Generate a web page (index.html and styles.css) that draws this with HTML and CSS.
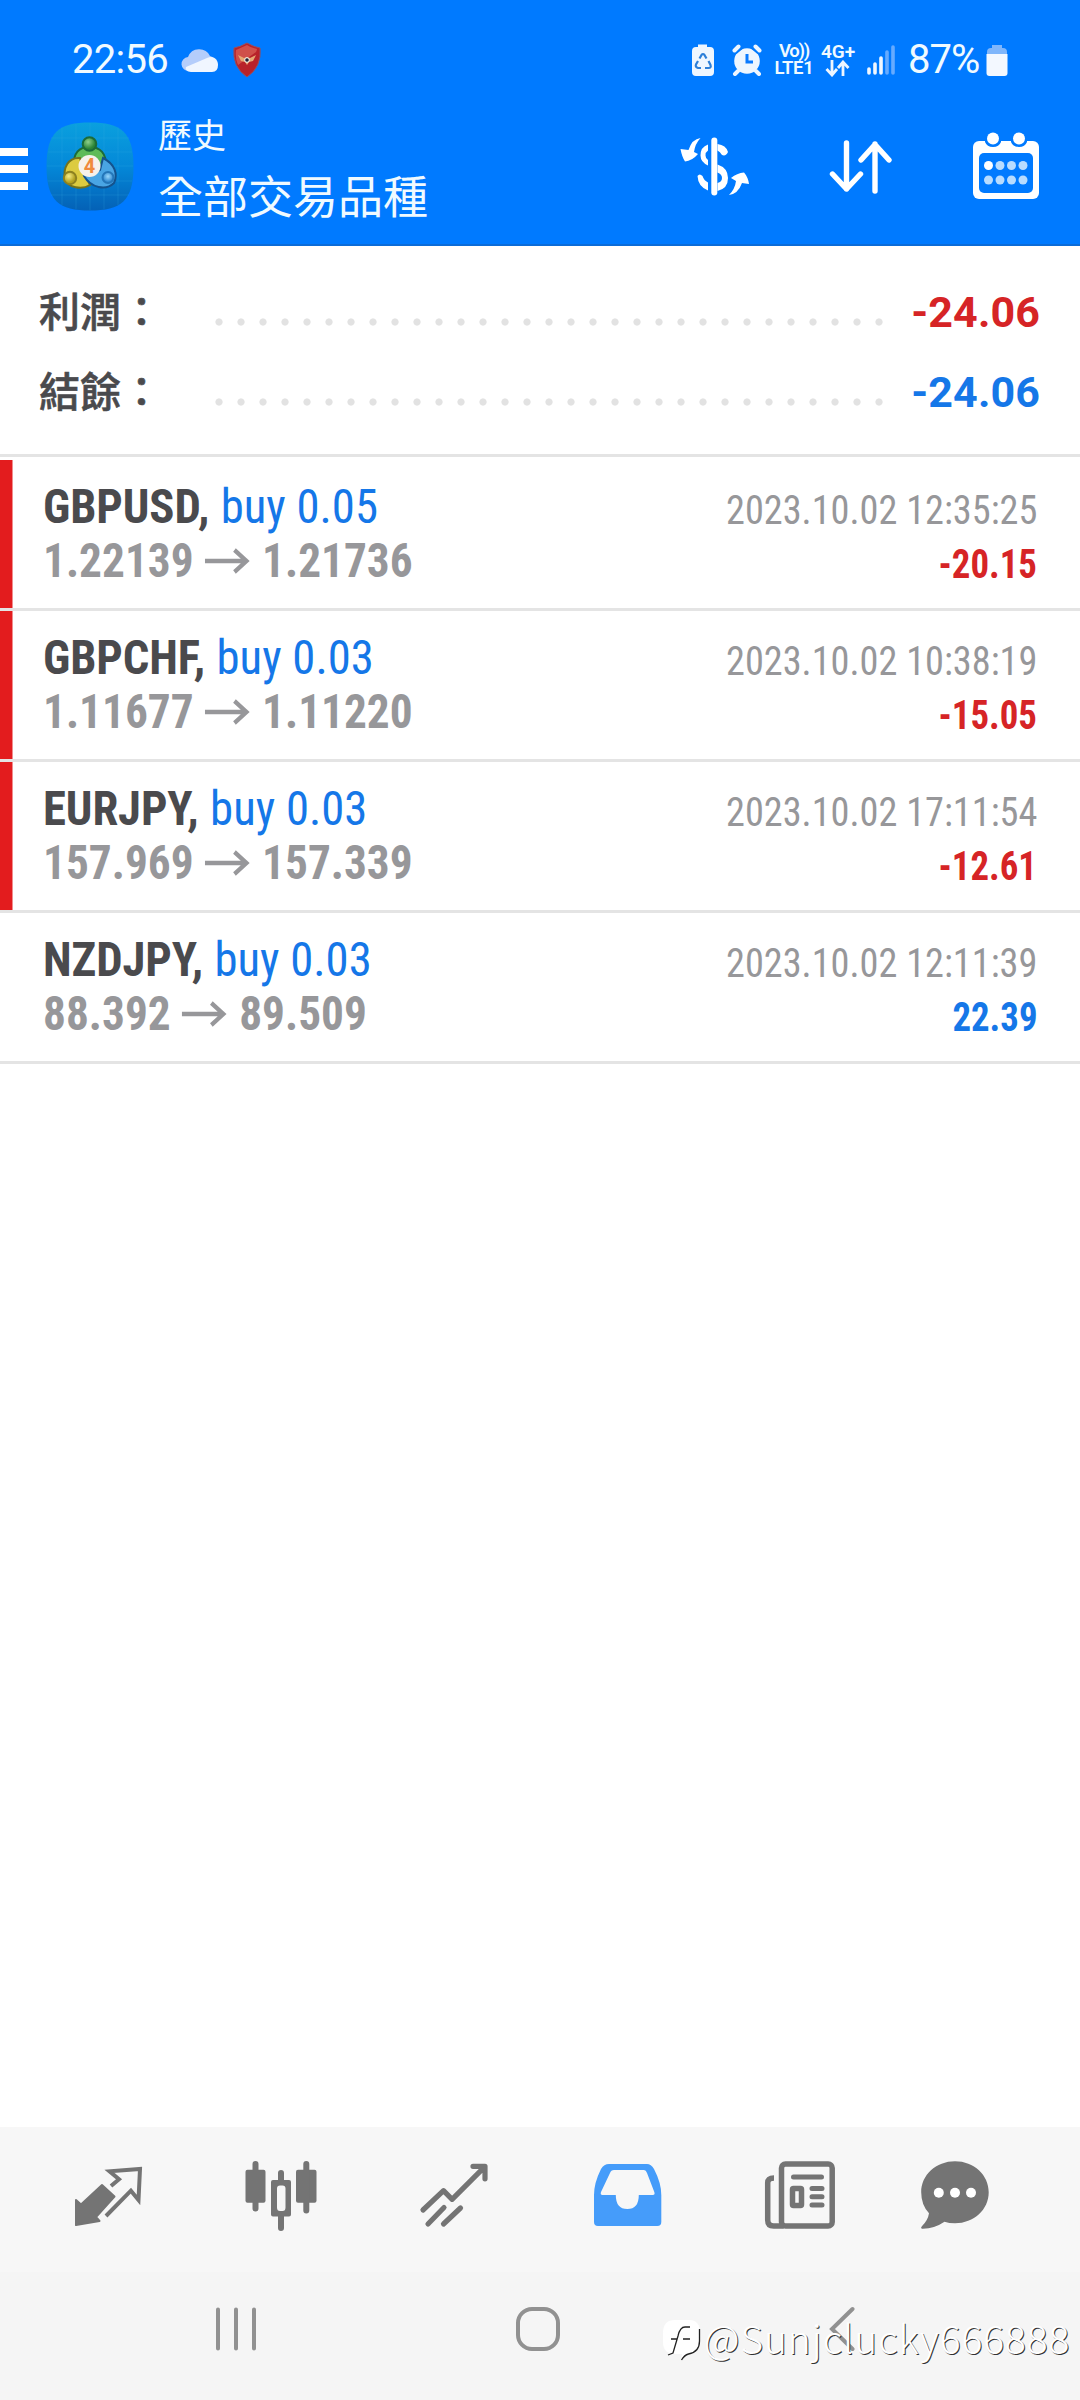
FILE: index.html
```html
<!DOCTYPE html>
<html lang="zh-Hant">
<head>
<meta charset="utf-8">
<title>歷史</title>
<link rel="stylesheet" href="styles.css">
</head>
<body>
<div class="screen">
  <header class="header">
    <div class="status">
      <span class="clock">22:56</span>
      <svg class="st-cloud" width="38" height="26" viewBox="0 0 38 26"><path d="M8 24a7 7 0 0 1-1-14A12 12 0 0 1 29 9a8 8 0 0 1 1 15z" fill="#b4cdfb"/><path d="M10 25C6 25 4 22 5 20L26 11C33 8 37 13 37 18q0 7-6 7z" fill="#f0f6ff"/></svg>
      <svg class="st-shield" width="28" height="36" viewBox="0 0 28 36"><path d="M14 1Q21 5 27 6Q29 25 14 35Q-1 25 1 6Q7 5 14 1z" fill="#b8222a" stroke="#96505f"/><path d="M14 3L3 8Q2 17 5 23L23 10Q24 8 24 7Q18 6 14 3z" fill="#d0504a"/><path d="M5 13l6 3 3-1 3 1 6-3-3 6-4 1-2 3-2-3-4-1z" fill="#e6a873"/><circle cx="14" cy="18" r="2.300" fill="#223" stroke="#fff"/></svg>
      <span class="st-gap"></span>
      <svg class="st-saver" width="24" height="34" viewBox="0 0 24 34"><path d="M7 4V1.500h9V4h3q4 0 4 4v21q0 4-4 4H5q-4 0-4-4V8q0-4 4-4z" fill="#eef6ff"/><path d="M8.500 15.500L10.500 12q1.500-2 3 0l2 3.500M17.500 18l2 4q1 3-2 3h-3.500M10 25H7q-3-1-2-3.500L7 18" fill="none" stroke="#2d7fd8" stroke-width="2.200"/></svg>
      <svg class="st-alarm" width="30" height="32" viewBox="0 0 30 32"><circle cx="15" cy="17" r="12.800" fill="#eef6ff"/><path d="M2 7l6-5M28 7l-6-5" stroke="#007aff" stroke-width="8"/><path d="M2.500 6.500l4-4M27.500 6.500l-4-4M6 27l-3 3M24 27l3 3" stroke="#eef6ff" stroke-width="4" stroke-linecap="round"/><path d="M15 10v8h6" fill="none" stroke="#0a7aff" stroke-width="3"/></svg>
      <span class="st-net volte"><b class="vo">Vo))</b><b>LTE1</b></span>
      <span class="st-net lte"><b>4G+</b><svg width="26" height="17" viewBox="0 0 26 17"><path d="M7 0v14M1.500 9L7 15l5-6M18 16V2M13 8l5-6 5.500 6" fill="none" stroke="#eef6ff" stroke-width="2.800"/></svg></span>
      <svg class="st-signal" width="28" height="32" viewBox="0 0 28 32"><g stroke-width="3.600" stroke-linecap="round" stroke="#f0f7ff"><path d="M2 25v4M8 20v9M14 14v15"/><path d="M20 8v21M26 3v26" stroke="#66abff"/></g></svg>
      <span class="percent">87%</span>
      <svg class="st-batt" width="22" height="33" viewBox="0 0 22 33"><path d="M6 4V1h10v3h1q4 0 4 4v3H1V8q0-4 4-4z" fill="#7fb6fb"/><path d="M.5 10h21v19q0 3-3 3h-15q-3 0-3-3z" fill="#f3f8ff"/></svg>
    </div>
    <div class="appbar">
      <div class="menu"><i></i><i></i><i></i></div>
      <svg class="logo" width="88" height="89" viewBox="0 0 88 89">
        <defs>
          <linearGradient id="sky" x1="0" y1="0" x2="0" y2="1"><stop offset="0" stop-color="#0aa0de"/><stop offset=".5" stop-color="#0488d8"/><stop offset="1" stop-color="#0461b6"/></linearGradient>
          <radialGradient id="gr" cx=".4" cy=".35"><stop offset="0" stop-color="#8fd08a"/><stop offset="1" stop-color="#2a8436"/></radialGradient>
          <radialGradient id="ye" cx=".4" cy=".35"><stop offset="0" stop-color="#f6ec86"/><stop offset="1" stop-color="#b3a221"/></radialGradient>
          <radialGradient id="bl" cx=".5" cy=".4"><stop offset="0" stop-color="#9ad7fb"/><stop offset="1" stop-color="#2c86cf"/></radialGradient>
        </defs>
        <path d="M44 .5C75 .5 87.500 10 87.500 44.500S75 88.500 44 88.500.5 79 .5 44.500 13 .5 44 .5z" fill="url(#sky)"/>
        <path d="M16 6v77M30 2v85M44 1v87M58 2v85M72 6v77M5 16h78M2 30h84M1 44h86M2 59h84M5 73h78" stroke="#35b2ea" stroke-opacity=".22"/>
        <g stroke-width="2">
          <path d="M28 44C27 31 33 25 43.500 25S61 31 60 46L52 50 36 42z" fill="#5fbb58" stroke="#1c6b38"/>
          <path d="M34 36C22 35 17 46 19 57 22 66 36 68 44 63L38 50z" fill="#dccb40" stroke="#74721c"/>
          <path d="M57 36C69 42 72 52 68 61 60 69 45 66 38 54L54 48z" fill="#49a5e4" stroke="#14528c"/>
          <circle cx="43.500" cy="22" r="6.800" fill="url(#gr)" stroke="#1c6b38"/>
          <circle cx="24" cy="56" r="6.200" fill="url(#ye)" stroke="#8d8120"/>
          <circle cx="62" cy="55.500" r="5.500" fill="url(#bl)" stroke="#2476b8"/>
        </g>
        <circle cx="43.500" cy="44" r="11" fill="#f7f1ea"/><text x="43.500" y="51" text-anchor="middle" class="four">4</text>
      </svg>
      <div class="titles"><div class="t1">歷史</div><div class="t2">全部交易品種</div></div>
      <svg class="ic-dollar" width="70" height="62" viewBox="0 0 70 62">
        <path d="M28 8.500Q20.500 11 20.500 19.500 20.500 26 28 29.500V24Q25.500 22.500 25.500 19.500 25.500 16 28 14.500zM17.500 40q2-3 5 0 1.500 4.500 5.500 6.500v8Q18 50.500 17.500 40zM37.500 8q8.500 1 10.500 8-2 4.500-6 3-2-3.500-4.500-4.500zM37.500 28.500Q48 32 48 42 48 52.500 37.500 55v-8q4.500-1 4.500-5t-4.500-5.500z" fill="#fff"/>
        <path d="M34.300 4.500v52" stroke="#fff" stroke-width="6" stroke-linecap="round"/>
        <path d="M20.500 2Q12 3 8.500 14L.5 13Q2 21 5 25.500Q12 25 18 18L14 16Q15 8 20.500 2zM49 59Q58 58 62 47L69 48Q68 41 64 36.500Q57 37 51 42L56 45Q55 53 49 59z" fill="#fff"/>
      </svg>
      <svg class="ic-sort" width="64" height="54" viewBox="0 0 64 54"><path d="M17.500 3v46M3.500 34l14 15 14-15M46 51V4M32 20L46 4.500 60 20" fill="none" stroke="#fff" stroke-width="5.400" stroke-linecap="round" stroke-linejoin="round"/></svg>
      <svg class="ic-cal" width="68" height="68" viewBox="0 0 68 68">
        <rect x="1" y="9" width="66" height="58" rx="6" fill="#fff"/><rect x="7" y="21" width="54" height="40" rx="5" fill="#007aff"/>
        <path d="M13 9v1q2 5 8 5t8-5V9zM39 9v1q2 5 8 5t8-5V9z" fill="#007aff"/>
        <circle cx="21" cy="6.500" r="6" fill="#fff"/><circle cx="47" cy="6.500" r="6" fill="#fff"/>
        <g fill="#b8dcff"><circle cx="16.500" cy="33.500" r="4.500" fill="#fff"/><circle cx="28" cy="33.500" r="4.500"/><circle cx="39.500" cy="33.500" r="4.500"/><circle cx="51" cy="33.500" r="4.500"/><circle cx="16.500" cy="48" r="4.500"/><circle cx="28" cy="48" r="4.500"/><circle cx="39.500" cy="48" r="4.500"/><circle cx="51" cy="48" r="4.500"/></g>
      </svg>
    </div>
  </header>

  <section class="summary">
    <div class="sum"><span class="lbl">利潤：</span><span class="dots"></span><span class="val red">-24.06</span></div>
    <div class="sum"><span class="lbl">結餘：</span><span class="dots"></span><span class="val blue">-24.06</span></div>
  </section>

  <main class="list">
    <div class="deal loss"><div class="line"><div class="order"><b class="sym">GBPUSD,</b><span class="side">buy 0.05</span></div><span class="date">2023.10.02 12:35:25</span></div>
      <div class="line"><div class="prices"><b>1.22139</b><svg class="arrow" width="50" height="28" viewBox="0 0 50 28"><path d="M0 14h46M32 3l13 11-13 11" fill="none" stroke="#97979a" stroke-width="4.400"/></svg><b>1.21736</b></div><b class="pl red">-20.15</b></div></div>
    <div class="deal loss"><div class="line"><div class="order"><b class="sym">GBPCHF,</b><span class="side">buy 0.03</span></div><span class="date">2023.10.02 10:38:19</span></div>
      <div class="line"><div class="prices"><b>1.11677</b><svg class="arrow" width="50" height="28" viewBox="0 0 50 28"><path d="M0 14h46M32 3l13 11-13 11" fill="none" stroke="#97979a" stroke-width="4.400"/></svg><b>1.11220</b></div><b class="pl red">-15.05</b></div></div>
    <div class="deal loss"><div class="line"><div class="order"><b class="sym">EURJPY,</b><span class="side">buy 0.03</span></div><span class="date">2023.10.02 17:11:54</span></div>
      <div class="line"><div class="prices"><b>157.969</b><svg class="arrow" width="50" height="28" viewBox="0 0 50 28"><path d="M0 14h46M32 3l13 11-13 11" fill="none" stroke="#97979a" stroke-width="4.400"/></svg><b>157.339</b></div><b class="pl red">-12.61</b></div></div>
    <div class="deal"><div class="line"><div class="order"><b class="sym">NZDJPY,</b><span class="side">buy 0.03</span></div><span class="date">2023.10.02 12:11:39</span></div>
      <div class="line"><div class="prices"><b>88.392</b><svg class="arrow" width="50" height="28" viewBox="0 0 50 28"><path d="M0 14h46M32 3l13 11-13 11" fill="none" stroke="#97979a" stroke-width="4.400"/></svg><b>89.509</b></div><b class="pl blue">22.39</b></div></div>
  </main>

  <nav class="tabs">
    <svg viewBox="0 0 72 72"><path d="M30 25L42.500 36.500 24 57 27.500 61 4 65V40l5 4.500z" fill="#747474" stroke="#747474" stroke-width="2" stroke-linejoin="round"/><path d="M39 26l8-6.700-9.500-8L68 9l-1.500 31-7.600-9.300L34 56" fill="none" stroke="#747474" stroke-width="4"/></svg>
    <svg viewBox="0 0 72 72"><g fill="#747474"><rect x=".5" y="9.700" width="20" height="33" rx="2"/><rect x="51" y="9.700" width="20.500" height="33" rx="2"/></g><path d="M10.500 4v44.500M61.300 4v46.500M36 13v8M36 56v12" stroke="#747474" stroke-width="6" stroke-linecap="round"/><path fill-rule="evenodd" d="M28 20h16q2 0 2 2v32.500q0 2-2 2H28q-2 0-2-2V22q0-2 2-2zm7 5.500q-3 0-3 3v19q0 3.500 3 3.500h2.500q3 0 3-3.500v-19q0-3-3-3z" fill="#747474"/></svg>
    <svg viewBox="0 0 72 72"><path d="M5 50l20.500-19.300 8.600 8.600 32-32M55 6.300h12v12.500M10 64l16-16.500M25.500 64l17-16" fill="none" stroke="#747474" stroke-width="5.200" stroke-linecap="round" stroke-linejoin="round"/></svg>
    <svg viewBox="0 0 72 72"><path fill-rule="evenodd" d="M18 4h38q4 0 7 5 7.300 14 7.300 26v27q0 4-4 4H7q-4 0-4-4V35Q3 23 10 9q3-5 8-5zm5 6q-3 0-4 3L10 32q-1 3 1.500 3h13.300q0 14 11.500 14T47.800 35h14q2.500 0 1.500-3L56 13q-1-3-3-3z" fill="#459cfa"/></svg>
    <svg viewBox="0 0 72 72"><g fill="none" stroke="#747474" stroke-width="5.500"><rect x="17.500" y="4" width="50.700" height="62" rx="4"/><path d="M10 18Q3.700 18 3.700 23V60q0 6 6 6h10"/><path d="M29.500 17h28M48 28.500h10M48 36.800h10M48 45h10" stroke-linecap="round" stroke-width="5"/><rect x="28.500" y="28.500" width="9" height="17" rx="1"/></g></svg>
    <svg viewBox="0 0 72 72"><path d="M36 1.300C55 1.300 69.700 15 69.700 32.300S55 63.300 36 63.300q-6 0-10.500-1.500Q15 69 3 68.700 1 68 3.500 65.500 9 60 10 53.300 2.200 45 2.200 32.300C2.200 15 17 1.300 36 1.300z" fill="#747474"/><g fill="#fff"><circle cx="19.800" cy="32.700" r="5"/><circle cx="36" cy="32.700" r="5"/><circle cx="52" cy="32.700" r="5"/></g></svg>
  </nav>
  <footer class="sysnav">
    <svg width="40" height="46" viewBox="0 0 40 46"><path d="M2 3.500v39M20 3.500v39M38 3.500v39" stroke="#919191" stroke-width="4" stroke-linecap="round"/></svg>
    <svg width="46" height="46" viewBox="0 0 46 46"><rect x="3" y="3" width="40" height="40" rx="14" fill="none" stroke="#919191" stroke-width="4"/></svg>
    <svg width="26" height="46" viewBox="0 0 26 46"><path d="M23.500 3L3 23l20.500 20" fill="none" stroke="#919191" stroke-width="4" stroke-linecap="round"/></svg>
  </footer>
  <div class="mark">
    <svg width="42" height="46" viewBox="0 0 42 46"><path d="M14 3h14q11 0 11 13v8q0 12-12 13l-7 6 1-6h-7Q2 37 2 25V16Q2 3 14 3z" fill="#fff"/><path d="M38.500 12v12q0 11-11 13-4 1-7 6M7 38l5-2 5-17q2-9 7-9h5M10 22h6M22 22h7" fill="none" stroke="#222" stroke-width="1.300"/></svg>
    <span>@Sunjclucky666888</span>
  </div>
</div>
</body>
</html>
```
FILE: styles.css
```css
* { box-sizing: border-box; }
body { margin: 0; background: #fff; font-family: Roboto, "Noto Sans CJK TC", sans-serif; }
.screen { position: relative; width: 1080px; height: 2400px; display: flex; flex-direction: column; overflow: hidden; }
svg { display: block; flex: none; }
.red { color: #d62426; }
.blue { color: #1577e8; }

.header { height: 246px; background: #007aff; border-bottom: 2px solid #0c6cd8; color: #f0faff; }
.status { height: 96px; padding: 24px 72px 0 72px; display: flex; align-items: center; white-space: nowrap; }
.clock, .percent { font-size: 40px; line-height: 72px; letter-spacing: -.7px; }
.clock { width: 98px; }
.st-cloud { margin-left: 11px; }
.st-shield { margin-left: 14px; }
.st-gap { flex: 1; }
.st-alarm { margin-left: 17px; }
.st-net { display: flex; flex-direction: column; align-items: center; font-size: 19px; line-height: 17px; height: 34px; }
.st-net b { font-weight: 600; }
.volte { width: 40px; margin-left: 12px; font-size: 18.5px; letter-spacing: -.3px; }
.vo { letter-spacing: -1.2px; }
.lte { width: 34px; margin-left: 7px; }
.st-signal { margin-left: 12px; }
.percent { width: 73px; margin-left: 13px; letter-spacing: -1px; }
.st-batt { margin-left: 5px; }

.appbar { height: 148px; display: flex; align-items: flex-start; }
.menu { width: 28px; margin: 52px 18px 0 0; display: grid; gap: 9px; }
.menu i { height: 8px; background: #fff; }
.logo { margin-top: 26px; }
.four { font: 700 20px Roboto, sans-serif; fill: #f08a3c; }
.titles { width: 521px; margin: 18px 0 0 24px; }
.t1 { font-size: 34px; line-height: 44px; }
.t2 { font-size: 45px; line-height: 60px; margin-top: 11px; }
.ic-dollar { margin: 40px 0 0 1px; }
.ic-sort { margin: 44px 0 0 79px; }
.ic-cal { margin: 36px 0 0 79px; }

.summary { height: 211px; padding: 26px 40px 0 39px; border-bottom: 3px solid #e4e4e4; }
.sum { display: flex; height: 80px; align-items: center; }
.lbl { width: 176px; padding-bottom: 6px; font-size: 41px; font-weight: 500; color: #4a4a4d; -webkit-text-stroke: .6px #4a4a4d; }
.dots { width: 682px; height: 8px; margin: 20px 0 0 -7px; background: radial-gradient(circle at center, #e2e2e2 3.2px, transparent 4px) 0 0 / 22px 8px; }
.val { flex: 1; text-align: right; font-size: 43px; font-weight: 700; letter-spacing: .1px; }

.list { flex: 1; padding-top: 3px; }
.deal { display: grid; grid-template-rows: 54px 54px; height: 151px; padding: 20px 43px 0 43px; border-bottom: 3px solid #e4e4e4; }
.loss { background: linear-gradient(#e31c1e, #e31c1e) 0 0 / 12.5px 100% no-repeat; }
.line { display: flex; justify-content: space-between; align-items: baseline; line-height: 54px; font-stretch: 75%; font-family: "Roboto Condensed", Roboto, sans-serif; white-space: nowrap; }
.order, .prices { display: flex; align-items: baseline; font-size: 49px; transform-origin: 0 50%; }
.order { transform: scaleX(.953); }
.prices { transform: scaleX(.925); color: #97979a; }
.sym { color: #4a4a4d; letter-spacing: -.1px; }
.side { color: #1577e8; margin-left: 12px; }
.arrow { align-self: center; margin: 0 12px; }
.date, .pl { font-size: 40px; transform-origin: 100% 50%; }
.date { color: #97979a; transform: translateY(1px) scaleX(.957); }
.pl { transform: translateY(1px) scaleX(.92); }

.tabs { height: 145px; background: #f7f7f7; display: grid; grid-template-columns: repeat(5, 173px) 137px; padding: 33px 0 0 21px; justify-items: center; }
.tabs svg { width: 72px; height: 72px; }
.sysnav { height: 128px; background: #f5f5f5; display: flex; padding: 34px 0 0 216px; }
.sysnav svg + svg { margin-left: 259px; }
.sysnav svg:last-child { margin-left: 268px; }
.mark { position: absolute; left: 661px; top: 2317px; display: flex; align-items: flex-start; gap: 1px; color: #fff; }
.mark span { font: 300 39px/40px "Noto Sans CJK SC", sans-serif; letter-spacing: .9px; text-shadow: 1px 1px 0 #333; }
```
